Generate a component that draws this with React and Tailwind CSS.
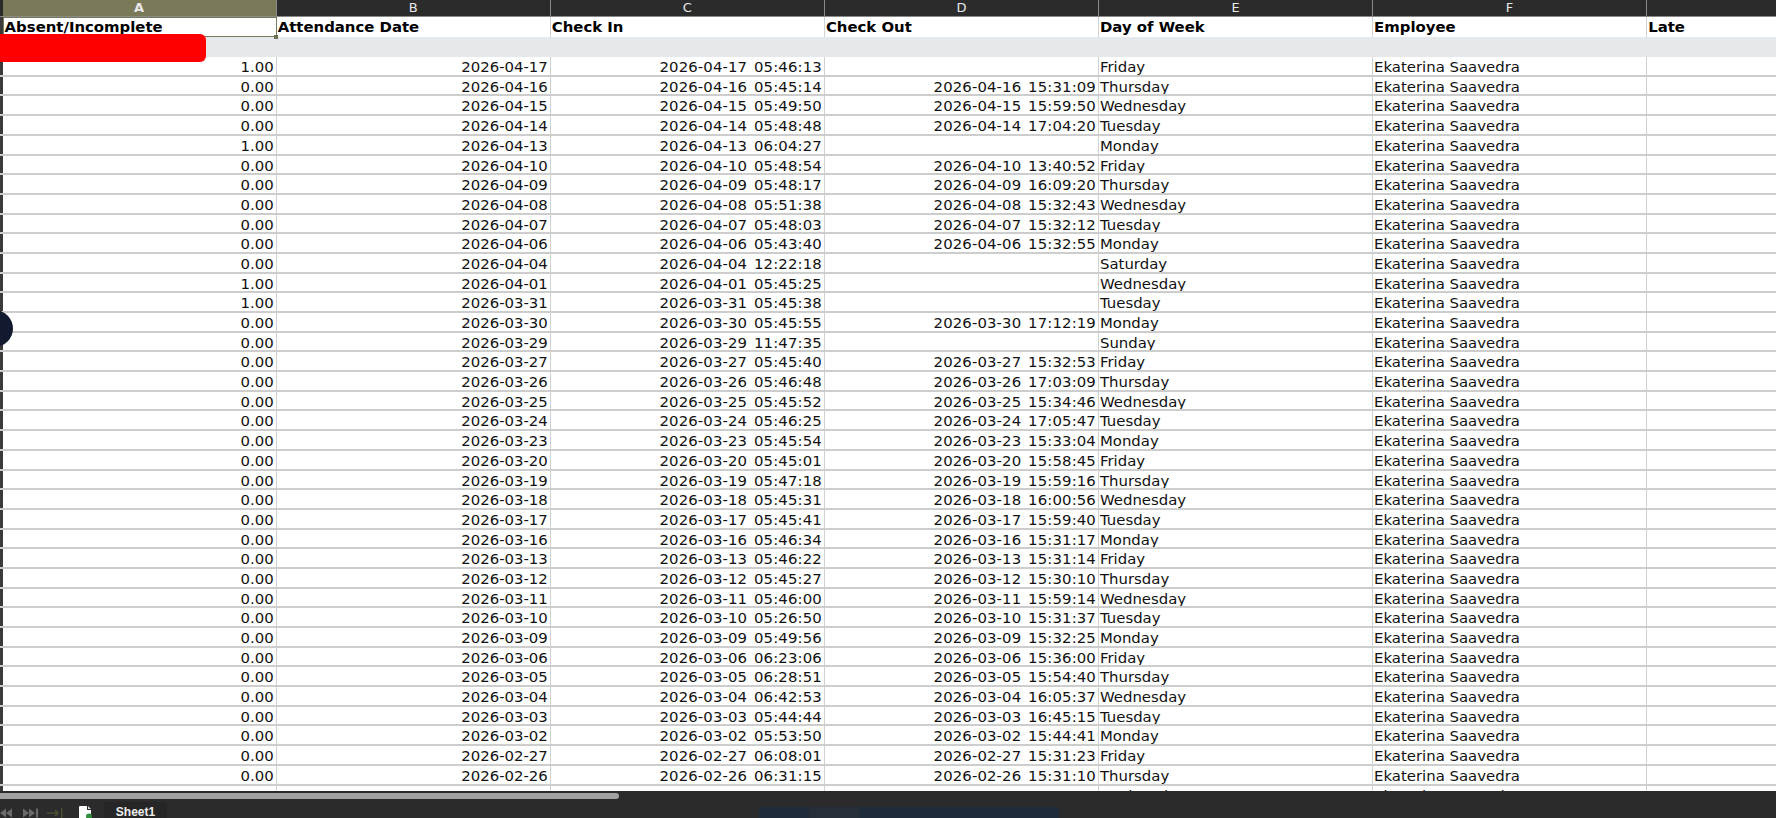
import React from "react";

const COLUMNS = ["A", "B", "C", "D", "E", "F", "G"];

// flag, date, check in, check out, weekday
const ROWS = [
  ["1.00", "2026-04-17", "05:46:13", "", "Friday"],
  ["0.00", "2026-04-16", "05:45:14", "15:31:09", "Thursday"],
  ["0.00", "2026-04-15", "05:49:50", "15:59:50", "Wednesday"],
  ["0.00", "2026-04-14", "05:48:48", "17:04:20", "Tuesday"],
  ["1.00", "2026-04-13", "06:04:27", "", "Monday"],
  ["0.00", "2026-04-10", "05:48:54", "13:40:52", "Friday"],
  ["0.00", "2026-04-09", "05:48:17", "16:09:20", "Thursday"],
  ["0.00", "2026-04-08", "05:51:38", "15:32:43", "Wednesday"],
  ["0.00", "2026-04-07", "05:48:03", "15:32:12", "Tuesday"],
  ["0.00", "2026-04-06", "05:43:40", "15:32:55", "Monday"],
  ["0.00", "2026-04-04", "12:22:18", "", "Saturday"],
  ["1.00", "2026-04-01", "05:45:25", "", "Wednesday"],
  ["1.00", "2026-03-31", "05:45:38", "", "Tuesday"],
  ["0.00", "2026-03-30", "05:45:55", "17:12:19", "Monday"],
  ["0.00", "2026-03-29", "11:47:35", "", "Sunday"],
  ["0.00", "2026-03-27", "05:45:40", "15:32:53", "Friday"],
  ["0.00", "2026-03-26", "05:46:48", "17:03:09", "Thursday"],
  ["0.00", "2026-03-25", "05:45:52", "15:34:46", "Wednesday"],
  ["0.00", "2026-03-24", "05:46:25", "17:05:47", "Tuesday"],
  ["0.00", "2026-03-23", "05:45:54", "15:33:04", "Monday"],
  ["0.00", "2026-03-20", "05:45:01", "15:58:45", "Friday"],
  ["0.00", "2026-03-19", "05:47:18", "15:59:16", "Thursday"],
  ["0.00", "2026-03-18", "05:45:31", "16:00:56", "Wednesday"],
  ["0.00", "2026-03-17", "05:45:41", "15:59:40", "Tuesday"],
  ["0.00", "2026-03-16", "05:46:34", "15:31:17", "Monday"],
  ["0.00", "2026-03-13", "05:46:22", "15:31:14", "Friday"],
  ["0.00", "2026-03-12", "05:45:27", "15:30:10", "Thursday"],
  ["0.00", "2026-03-11", "05:46:00", "15:59:14", "Wednesday"],
  ["0.00", "2026-03-10", "05:26:50", "15:31:37", "Tuesday"],
  ["0.00", "2026-03-09", "05:49:56", "15:32:25", "Monday"],
  ["0.00", "2026-03-06", "06:23:06", "15:36:00", "Friday"],
  ["0.00", "2026-03-05", "06:28:51", "15:54:40", "Thursday"],
  ["0.00", "2026-03-04", "06:42:53", "16:05:37", "Wednesday"],
  ["0.00", "2026-03-03", "05:44:44", "16:45:15", "Tuesday"],
  ["0.00", "2026-03-02", "05:53:50", "15:44:41", "Monday"],
  ["0.00", "2026-02-27", "06:08:01", "15:31:23", "Friday"],
  ["0.00", "2026-02-26", "06:31:15", "15:31:10", "Thursday"],
  ["0.00", "2026-02-25", "10:11:05", "15:55:40", "Wednesday"],
];

const cellBase = "w-[274.1px] shrink-0 border-r border-[#d0d2d2] overflow-hidden whitespace-nowrap";

function Cell({ children, right, first }) {
  const pad = right ? "text-right pr-[2px]" : first ? "text-left pl-[2px]" : "text-left pl-[1px]";
  return <div className={`${cellBase} ${pad}`}>{children}</div>;
}

function Strip() {
  return <div className="w-[2.6px] shrink-0 bg-[#3a3a3a]" />;
}

function Stamp({ date, time }) {
  if (!time) return null;
  return <span className="tracking-[0.12px] [word-spacing:2px]">{`${date} ${time}`}</span>;
}

function DataRow({ row }) {
  const [flag, date, checkIn, checkOut, day] = row;
  return (
    <div className="flex h-[19.7px] shrink-0 border-b-2 border-[#cdcdcd] bg-white text-[14.9px] leading-[21px] text-[#111]">
      <Strip />
      <Cell right>{flag}</Cell>
      <Cell right>{date}</Cell>
      <Cell right>
        <Stamp date={date} time={checkIn} />
      </Cell>
      <Cell right>
        <Stamp date={date} time={checkOut} />
      </Cell>
      <Cell>{day}</Cell>
      <Cell>Ekaterina Saavedra</Cell>
      <Cell />
    </div>
  );
}

function ColumnHeader({ label }) {
  const active = label === "A";
  return (
    <div
      className={`w-[274.1px] shrink-0 border-r border-[#8a8a8a] text-center ${
        active ? "bg-[#7a7a58] font-bold" : ""
      }`}
    >
      {label === "G" ? "" : label}
    </div>
  );
}

function SheetNav() {
  return (
    <svg width="64" height="11" viewBox="0 0 64 11" className="shrink-0">
      <g fill="#6a6a6a">
        <path d="M0 6l6-4.5v9zM6 6l6-4.5v9z" />
        <path d="M23 1.5l6 4.5-6 4.5zM29 1.5l6 4.5-6 4.5zM36 1.5h2v9h-2z" />
      </g>
      <path d="M47 6h11M55 3l3 3-3 3" fill="none" stroke="#4d4f35" strokeWidth="1.6" />
      <path d="M61 1h1.5v10H61z" fill="#4d4f35" />
    </svg>
  );
}

function NewSheetIcon() {
  return (
    <svg width="14" height="12" viewBox="0 0 14 12" className="shrink-0">
      <path d="M1 1q0-1 1-1h7v4h4v8H1z" fill="#fff" />
      <path d="M10 0l3 3h-3z" fill="#d8d8d8" />
      <circle cx="11" cy="10.5" r="3" fill="#2f8f3a" />
    </svg>
  );
}

export default function App() {
  return (
    <div className="relative flex h-[818px] w-[1776px] flex-col overflow-hidden bg-[#2b2b2b] font-['DejaVu_Sans','Liberation_Sans',sans-serif]">
      <div className="flex h-[17px] shrink-0 border-b border-[#8a8a8a] pl-[2.6px] text-[13px] leading-[16px] text-[#e8e8e8]">
        {COLUMNS.map((c) => (
          <ColumnHeader key={c} label={c} />
        ))}
      </div>

      <div className="flex h-[773.6px] shrink-0 flex-col overflow-hidden">
        <div className="flex h-[19.7px] shrink-0 bg-white text-[14.9px] font-bold leading-[21px] text-black">
          <Strip />
          <Cell first>Absent/Incomplete</Cell>
          <Cell>Attendance Date</Cell>
          <Cell>Check In</Cell>
          <Cell>Check Out</Cell>
          <Cell>Day of Week</Cell>
          <Cell>Employee</Cell>
          <Cell>Late</Cell>
        </div>
        <div className="flex h-[20.4px] shrink-0 bg-[#e6e9ec]">
          <Strip />
        </div>
        {ROWS.map((row) => (
          <DataRow key={row[1]} row={row} />
        ))}
      </div>

      {/* scrollbar */}
      <div className="mt-[2.4px] h-[6px] w-[619px] shrink-0 rounded-r-[3px] bg-[#a2a2a2]" />

      <div className="mt-[3px] flex h-[16px] shrink-0 items-start">
        <div className="mt-[5px]">
          <SheetNav />
        </div>
        <div className="ml-[14px] mt-[4px]">
          <NewSheetIcon />
        </div>
        <div className="ml-[12px] h-[16px] w-[63px] bg-[#262626] pt-[4px] text-center font-['Liberation_Sans',sans-serif] text-[12px] font-bold leading-[12px] text-[#eee]">
          Sheet1
        </div>
        <div className="ml-[592px] mt-[5px] h-[11px] w-[50px] bg-[#1f2a3a]" />
        <div className="mt-[5px] h-[11px] w-[50px] bg-[#262e3a]" />
        <div className="mt-[5px] h-[11px] w-[200px] bg-[#1f2a3a]" />
      </div>

      {/* selected cell outline */}
      <div className="absolute left-[2.6px] top-[17px] h-[20px] w-[274px] border border-[#7a7a58]" />
      <div className="absolute left-[274px] top-[35px] h-[4px] w-[4px] bg-[#6e6e50]" />
      {/* redaction */}
      <div className="absolute left-0 top-[34px] h-[28px] w-[206px] rounded-r-[6px] bg-[#ff0000]" />
      {/* floating button peeking in */}
      <div className="absolute left-[-24px] top-[310px] h-[37px] w-[37px] rounded-full bg-[#111a2e]" />
    </div>
  );
}
